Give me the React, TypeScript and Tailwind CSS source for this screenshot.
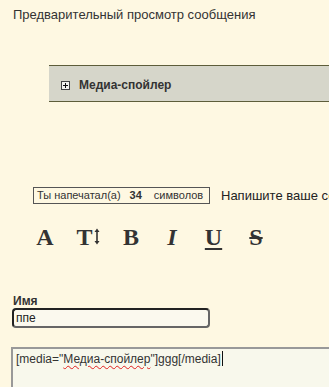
import React from "react";

export default function App() {
  const sans = { fontFamily: '"Liberation Sans", Arial, sans-serif' };
  const serif = { fontFamily: '"Liberation Serif", "Times New Roman", serif' };
  return (
    <div className="w-[329px] h-[387px] overflow-hidden bg-[#fef8e2] text-[#333]" style={sans}>
      <div className="pt-[7px] pl-[13px] text-[13px] leading-[16px] text-[#333]">
        Предварительный просмотр сообщения
      </div>

      <div className="mt-[42px] ml-[49px] w-[300px] h-[37px] bg-[#d6d6ca] border-y border-[#5d5d3a] flex items-center">
        <div className="ml-[12px] mt-[3px] w-[9px] h-[9px] border border-[#444] bg-[#f4f4f0] flex items-center justify-center relative">
          <div className="absolute w-[5px] h-[1px] bg-[#111]" />
          <div className="absolute w-[1px] h-[5px] bg-[#111]" />
        </div>
        <span className="ml-[9px] mt-[2px] text-[12px] font-bold text-[#333]">Медиа-спойлер</span>
      </div>

      <div className="mt-[84px] flex items-center whitespace-nowrap">
        <div className="ml-[33px] w-[177px] h-[17px] shrink-0 border border-[#555] flex items-center text-[11px] leading-[13px] text-[#333] pl-[3px]">
          <span>Ты напечатал(а)</span>
          <span className="ml-[9px] font-bold">34</span>
          <span className="ml-[12px]">символов</span>
        </div>
        <span className="ml-[11px] text-[13px] text-[#222]">Напишите ваше сообщение</span>
      </div>

      <div className="mt-[19px] ml-[24px] flex items-center h-[24px] text-[24px] leading-[24px] font-bold text-[#333]" style={serif}>
        <div className="w-[42px] flex justify-center">A</div>
        <div className="w-[44px] flex justify-center items-center">
          <span>T</span>
          <svg width="6" height="17" viewBox="0 0 6 17" className="ml-[1px]">
            <path d="M3 2 L3 15" stroke="#333" strokeWidth="1.6" />
            <path d="M0.5 4 L3 0.5 L5.5 4 Z" fill="#333" />
            <path d="M0.5 13 L3 16.5 L5.5 13 Z" fill="#333" />
          </svg>
        </div>
        <div className="w-[42px] flex justify-center">B</div>
        <div className="w-[40px] flex justify-center italic">I</div>
        <div className="w-[43px] flex justify-center underline decoration-[2px] underline-offset-[3px]">U</div>
        <div className="w-[42px] flex justify-center line-through decoration-[2px]">S</div>
      </div>

      <div className="mt-[45px] ml-[13px] text-[12px] leading-[14px] font-bold text-[#333]">Имя</div>
      <div className="ml-[12px] w-[198px] h-[20px] rounded-[4px] border-2 border-t-[#222] border-l-[#222] border-r-[#666] border-b-[#666] bg-[#fbf9ee] flex items-center pl-[2px] text-[12px] text-[#222]">
        ппе
      </div>

      <div className="mt-[19px] ml-[11px] w-[330px] h-[60px] border-t-2 border-l-2 border-[#999] bg-[#f8f8ec] pt-[2px] pl-[3px] text-[12px] leading-[16px] text-[#333] flex items-start">
        <span className="whitespace-nowrap">
          [media="
          <span className="underline decoration-wavy decoration-[#e02020] decoration-[1px] underline-offset-[2px]">Медиа-спойлер</span>
          "]ggg[/media]
        </span>
        <span className="w-[1px] h-[15px] bg-[#111] ml-[1px]" />
      </div>
    </div>
  );
}
